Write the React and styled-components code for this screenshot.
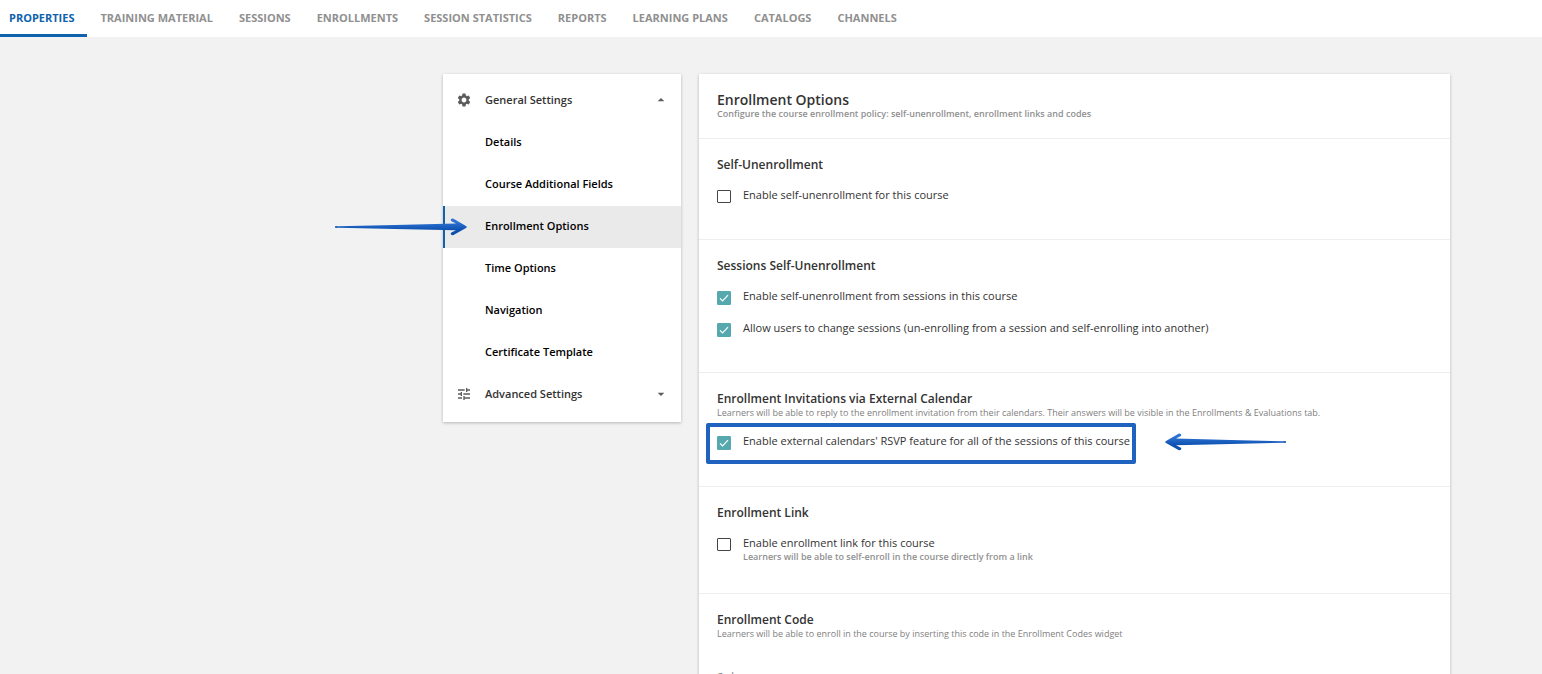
import React from 'react';
import styled, { createGlobalStyle, ThemeProvider } from 'styled-components';
import { MdSettings, MdTune, MdArrowDropUp, MdArrowDropDown } from 'react-icons/md';

const theme = {
  bg: '#f2f2f2',
  panel: '#ffffff',
  primary: '#0f62ab',
  marker: '#1f62c0',
  teal: '#55a8ae',
  text: '#333333',
  muted: '#909090',
  line: '#eeeeee',
};

const GlobalStyle = createGlobalStyle`
  * {
    box-sizing: border-box;
  }

  body {
    margin: 0;
    background: ${theme.bg};
    font-family: 'Open Sans', 'Noto Sans', sans-serif;
    color: ${theme.text};
  }

  h1, h2, p, ul {
    margin: 0;
    padding: 0;
  }
`;

const Page = styled.div`
  display: flex;
  flex-direction: column;
  height: 100vh;
  overflow: hidden;
`;

const Tabs = styled.nav`
  display: flex;
  flex-shrink: 0;
  background: ${({ theme }) => theme.panel};
`;

const Tab = styled.a`
  padding: 10px 13px 8px;
  border-bottom: 3px solid
    ${({ $active, theme }) => ($active ? theme.primary : 'transparent')};
  color: ${({ $active, theme }) => ($active ? theme.primary : theme.muted)};
  font-size: 11px;
  font-weight: 700;
  line-height: 16px;
  text-decoration: none;
  white-space: nowrap;

  &:first-child {
    padding-left: 9px;
  }
`;

const Main = styled.main`
  display: grid;
  grid-template-columns: 238px minmax(0, 1fr);
  align-items: start;
  gap: 18px;
  padding: 37px 92px 0 443px;
`;

const Panel = styled.div`
  background: ${({ theme }) => theme.panel};
  box-shadow: 0 1px 3px rgba(0, 0, 0, 0.25);
`;

const Sidebar = styled(Panel).attrs({ as: 'aside' })`
  padding: 6px 0;
`;

const Menu = styled.ul`
  list-style: none;
`;

const Group = styled.button`
  display: grid;
  grid-template-columns: 29px 1fr 16px;
  align-items: center;
  width: 100%;
  height: 42px;
  padding: 0 12px 2px 13px;
  border: 0;
  background: none;
  color: ${({ theme }) => theme.text};
  font: 600 11px/16px 'Open Sans', 'Noto Sans', sans-serif;
  text-align: left;

  svg {
    color: #5c5c5c;
  }
`;

const MenuItem = styled.li`
  position: relative;
`;

const MenuLink = styled.a`
  display: flex;
  align-items: center;
  height: 42px;
  padding: 0 0 2px 40px;
  border-left: 2px solid
    ${({ $active, theme }) => ($active ? theme.primary : 'transparent')};
  background: ${({ $active }) => ($active ? '#eaeaea' : 'transparent')};
  color: #000;
  font-size: 11px;
  font-weight: 600;
  line-height: 16px;
  text-decoration: none;
`;

const Section = styled.section`
  padding: 18px 18px ${({ $bottom = 28 }) => $bottom}px;
  border-bottom: 1px solid ${({ theme }) => theme.line};
`;

const PageTitle = styled.h1`
  font-size: 14px;
  font-weight: 600;
  line-height: 16px;
`;

const Title = styled.h2`
  font-size: 12px;
  font-weight: 600;
  line-height: 16px;
`;

const Hint = styled.p`
  color: ${({ theme, $light }) => ($light ? '#808080' : theme.muted)};
  font-size: 9px;
  font-weight: ${({ $light }) => ($light ? 400 : 600)};
  line-height: 12px;
`;

const Options = styled.div`
  display: grid;
  justify-items: start;
  gap: 2px;
  margin-top: 8px;
`;

const Option = styled.label`
  position: relative;
  display: grid;
  grid-template-columns: 14px auto;
  column-gap: 12px;
  align-items: start;
  min-height: 30px;
  padding: 7px 0 1px;
  font-size: 11px;
  line-height: 14px;
`;

const Box = styled.span`
  display: grid;
  margin-top: 2px;

  > * {
    grid-area: 1 / 1;
  }
`;

const Check = styled.input`
  appearance: none;
  width: 14px;
  height: 13px;
  margin: 0;
  border: 1px solid #444;
  border-radius: 1px;
  background: #fff;

  &:checked {
    height: 14px;
    border-color: ${({ theme }) => theme.teal};
    background: ${({ theme }) => theme.teal};
  }

  &:not(:checked) + svg {
    display: none;
  }
`;

const Tick = styled.svg`
  width: 14px;
  height: 14px;
  pointer-events: none;
`;

const OptionHint = styled.small`
  display: block;
  color: ${({ theme }) => theme.muted};
  font-size: 9px;
  font-weight: 600;
  line-height: 14px;
`;

const Highlight = styled.span`
  position: absolute;
  inset: -4px -6px -7px -11px;
  border: 4px solid ${({ theme }) => theme.marker};
  border-radius: 2px;
  pointer-events: none;
`;

const Arrow = styled.svg`
  position: absolute;
  height: 18px;
  pointer-events: none;
`;

const MenuArrow = styled(Arrow)`
  top: 12px;
  left: -108px;
  width: 132px;
`;

const OptionArrow = styled(Arrow)`
  top: 6px;
  left: calc(100% + 35px);
  width: 121px;
`;

const Field = styled.div`
  display: grid;
  gap: 6px;
  margin-top: 29px;
  font-size: 9px;
  font-weight: 600;
  line-height: 14px;
  color: ${({ theme }) => theme.muted};

  input {
    height: 28px;
    border: 0;
    border-bottom: 1px solid #ccc;
  }
`;

const tabs = [
  'PROPERTIES',
  'TRAINING MATERIAL',
  'SESSIONS',
  'ENROLLMENTS',
  'SESSION STATISTICS',
  'REPORTS',
  'LEARNING PLANS',
  'CATALOGS',
  'CHANNELS',
];

const menu = [
  'Details',
  'Course Additional Fields',
  'Enrollment Options',
  'Time Options',
  'Navigation',
  'Certificate Template',
];

const Gradient = ({ id }) => (
  <defs>
    <linearGradient id={id} x1="0" y1="0" x2="0" y2="18" gradientUnits="userSpaceOnUse">
      <stop offset="0.2" stopColor="#2f74d4" />
      <stop offset="0.7" stopColor="#0c4fae" />
    </linearGradient>
  </defs>
);

const RightArrow = () => (
  <MenuArrow viewBox="0 0 132 18" aria-hidden="true">
    <Gradient id="right-arrow" />
    <path
      fill="url(#right-arrow)"
      d="M0 8.2 Q0 8 1 8 L3 8.2 L60 6.9 L121 5.6 L116.5 3.2 Q115.2 2.2 116 1.2 Q117 0 118.5 0.8 L131 8 Q132.5 9 131 10 L118.5 17 Q117 17.8 116 16.6 Q115.2 15.6 116.5 14.6 L121 12.2 L60 11 L3 9.8 L1 10 Q0 10 0 9.2 Z"
    />
  </MenuArrow>
);

const LeftArrow = () => (
  <OptionArrow viewBox="0 0 121 18" aria-hidden="true">
    <Gradient id="left-arrow" />
    <path
      fill="url(#left-arrow)"
      d="M121 8.2 Q121 8 120 8 L118 8.2 L66 6.9 L11 5.6 L15.5 3.2 Q16.8 2.2 16 1.2 Q15 0 13.5 0.8 L1 8 Q-0.5 9 1 10 L13.5 17 Q15 17.8 16 16.6 Q16.8 15.6 15.5 14.6 L11 12.2 L66 11 L118 9.8 L120 10 Q121 10 121 9.2 Z"
    />
  </OptionArrow>
);

const CheckOption = ({ label, hint, checked, children }) => (
  <Option>
    <Box>
      <Check type="checkbox" defaultChecked={checked} />
      <Tick viewBox="0 0 14 14" aria-hidden="true">
        <path d="M3 7.4 L5.6 10 L11 4.2" fill="none" stroke="#fff" strokeWidth="1.2" />
      </Tick>
    </Box>
    <span>
      {label}
      {hint && <OptionHint>{hint}</OptionHint>}
    </span>
    {children}
  </Option>
);

function App() {
  return (
    <ThemeProvider theme={theme}>
      <GlobalStyle />
      <Page>
        <Tabs>
          {tabs.map((tab, i) => (
            <Tab key={tab} href="#" $active={i === 0}>
              {tab}
            </Tab>
          ))}
        </Tabs>
        <Main>
          <Sidebar>
            <Group type="button" aria-expanded="true">
              <MdSettings size={16} />
              General Settings
              <MdArrowDropUp size={16} />
            </Group>
            <Menu>
              {menu.map(item => {
                const active = item === 'Enrollment Options';
                return (
                  <MenuItem key={item}>
                    <MenuLink href="#" $active={active}>
                      {item}
                    </MenuLink>
                    {active && <RightArrow />}
                  </MenuItem>
                );
              })}
            </Menu>
            <Group type="button" aria-expanded="false">
              <MdTune size={16} />
              Advanced Settings
              <MdArrowDropDown size={16} />
            </Group>
          </Sidebar>
          <Panel>
            <Section $bottom={18}>
              <PageTitle>Enrollment Options</PageTitle>
              <Hint>
                Configure the course enrollment policy: self-unenrollment, enrollment
                links and codes
              </Hint>
            </Section>
            <Section>
              <Title>Self-Unenrollment</Title>
              <Options>
                <CheckOption label="Enable self-unenrollment for this course" />
              </Options>
            </Section>
            <Section>
              <Title>Sessions Self-Unenrollment</Title>
              <Options>
                <CheckOption
                  checked
                  label="Enable self-unenrollment from sessions in this course"
                />
                <CheckOption
                  checked
                  label="Allow users to change sessions (un-enrolling from a session and self-enrolling into another)"
                />
              </Options>
            </Section>
            <Section $bottom={29}>
              <Title>Enrollment Invitations via External Calendar</Title>
              <Hint $light>
                Learners will be able to reply to the enrollment invitation from their
                calendars. Their answers will be visible in the Enrollments &amp;
                Evaluations tab.
              </Hint>
              <Options>
                <CheckOption
                  checked
                  label="Enable external calendars' RSVP feature for all of the sessions of this course"
                >
                  <Highlight />
                  <LeftArrow />
                </CheckOption>
              </Options>
            </Section>
            <Section>
              <Title>Enrollment Link</Title>
              <Options>
                <CheckOption
                  label="Enable enrollment link for this course"
                  hint="Learners will be able to self-enroll in the course directly from a link"
                />
              </Options>
            </Section>
            <Section>
              <Title>Enrollment Code</Title>
              <Hint $light>
                Learners will be able to enroll in the course by inserting this code in
                the Enrollment Codes widget
              </Hint>
              <Field>
                <label htmlFor="code">Code</label>
                <input id="code" type="text" />
              </Field>
            </Section>
          </Panel>
        </Main>
      </Page>
    </ThemeProvider>
  );
}

export default App;
